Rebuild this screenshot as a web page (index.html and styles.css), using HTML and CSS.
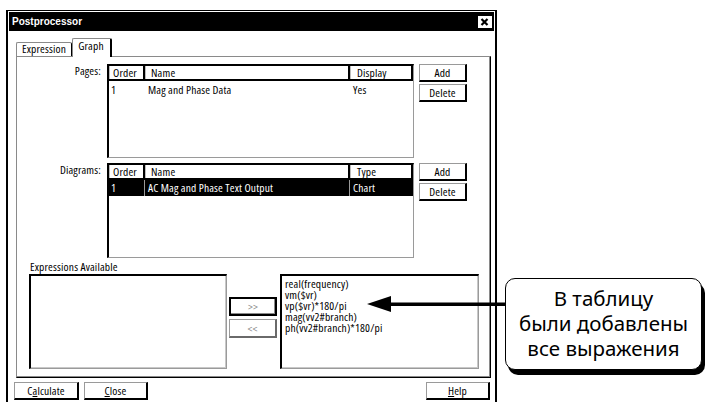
FILE: index.html
```html
<!DOCTYPE html>
<html>
<head>
<meta charset="utf-8">
<link rel="stylesheet" href="styles.css">
</head>
<body>
<div class="dialog">
  <div class="titlebar">
    <span class="title">Postprocessor</span>
    <span class="close"><svg width="13" height="12" viewBox="0 0 13 12"><path d="M3.5 3 L9.5 9 M9.5 3 L3.5 9" stroke="#000" stroke-width="2.2"/></svg></span>
  </div>
  <div class="tabs">
    <div class="tab">Expression</div>
    <div class="tab active">Graph</div>
  </div>
  <div class="panel">
    <div class="row">
      <div class="label">Pages:</div>
      <div class="list pages">
        <div class="thead"><div class="c1">Order</div><div class="c2">Name</div><div class="c3">Display</div></div>
        <div class="tr"><div class="c1">1</div><div class="c2">Mag and Phase Data</div><div class="c3">Yes</div></div>
      </div>
      <div class="btns"><div class="btn">Add</div><div class="btn">Delete</div></div>
    </div>
    <div class="row second">
      <div class="label">Diagrams:</div>
      <div class="list diagrams">
        <div class="thead"><div class="c1">Order</div><div class="c2">Name</div><div class="c3">Type</div></div>
        <div class="tr sel"><div class="c1">1</div><div class="c2">AC Mag and Phase Text Output</div><div class="c3">Chart</div></div>
      </div>
      <div class="btns"><div class="btn">Add</div><div class="btn">Delete</div></div>
    </div>
    <div class="exlabel">Expressions Available</div>
    <div class="exrow">
      <div class="box left"></div>
      <div class="mid">
        <div class="btn def">&gt;&gt;</div>
        <div class="btn dis">&lt;&lt;</div>
      </div>
      <div class="box right">real(frequency)<br>vm($vr)<br>vp($vr)*180/pi<br>mag(vv2#branch)<br>ph(vv2#branch)*180/pi</div>
    </div>
  </div>
  <div class="footer">
    <div class="btn calc">C<u>a</u>lculate</div>
    <div class="btn closeb"><u>C</u>lose</div>
    <div class="btn help"><u>H</u>elp</div>
  </div>
</div>
<svg class="arrow" width="707" height="402" viewBox="0 0 707 402">
  <polygon points="367,304 391,296 391,312" fill="#000"/>
  <rect x="389" y="302.5" width="118" height="3.5" fill="#000"/>
</svg>
<div class="callout">
  <div>В таблицу</div>
  <div>были добавлены</div>
  <div>все выражения</div>
</div>
</body>
</html>
```
FILE: styles.css
```css
* { box-sizing: border-box; }
body {
  margin: 0;
  padding: 10px 0 0 6px;
  width: 707px;
  height: 402px;
  overflow: hidden;
  position: relative;
  background: #fff;
  color: #000;
  font-family: "Open Sans", "Liberation Sans", Arial, sans-serif;
  font-stretch: 75%;
  font-size: 11.5px;
  letter-spacing: 0.15px;
}
.dialog {
  width: 491px;
  height: 400px;
  border: 2px solid #000;
  border-top-width: 1px;
  padding: 1px;
  display: flex;
  flex-direction: column;
}
.titlebar {
  height: 19px;
  flex: none;
  background: #000;
  color: #fff;
  display: flex;
  align-items: center;
  justify-content: space-between;
  padding: 0 2px 0 3px;
}
.title {
  font-family: "Liberation Sans", Arial, sans-serif;
  font-stretch: normal;
  font-weight: bold;
  font-size: 10px;
  letter-spacing: 0;
}
.close {
  width: 14px;
  height: 12px;
  background: #fff;
  display: flex;
}
.tabs {
  height: 25px;
  flex: none;
  display: flex;
  align-items: flex-end;
  padding-left: 7px;
  position: relative;
  z-index: 2;
}
.tab {
  height: 14px;
  border: 1px solid #8a8a8a;
  border-bottom: none;
  border-right: 1px solid #000;
  border-radius: 2px 2px 0 0;
  padding: 0 5px 0 5px;
  line-height: 12px;
  background: #fff;
}
.tab.active {
  height: 19px;
  margin-bottom: -1px;
  padding: 0 6px 0 5px;
  line-height: 14px;
  border-left: 1px solid #8a8a8a;
  border-right: 2px solid #000;
}
.panel {
  margin-left: 7px;
  width: 475px;
  border: 1px solid #8a8a8a;
  border-right: 1px solid #000;
  border-bottom: 1px solid #000;
  box-shadow: inset -1px -1px 0 #8a8a8a;
  padding: 7px 0 8px 0;
  flex: none;
}
.row {
  display: flex;
  height: 94px;
}
.row.second {
  margin-top: 5px;
  height: 95px;
}
.label {
  width: 84px;
  text-align: right;
  padding-top: 1px;
  margin-right: 6px;
  line-height: 11px;
}
.list {
  width: 307px;
  height: 100%;
  border-top: 2px solid #000;
  border-left: 2px solid #000;
  border-right: 1px solid #9a9a9a;
  border-bottom: 1px solid #9a9a9a;
  background: #fff;
}
.thead, .tr {
  display: flex;
  line-height: 11px;
}
.thead {
  height: 15px;
  border-bottom: 2px solid #000;
}
.thead > div {
  border-right: 2px solid #000;
  border-left: 1px solid #bdbdbd;
  padding: 1px 0 0 3px;
}
.c1 { width: 36px; flex: none; padding-left: 2px; }
.c2 { width: 205px; flex: none; padding-left: 3px; }
.c3 { width: 63px; flex: none; padding-left: 3px; }
.thead .c3 { width: 63px; padding-left: 6px; }
.thead .c2 { padding-left: 5px; }
.tr {
  height: 16px;
  padding-top: 3px;
}
.tr.sel {
  background: #000;
  color: #fff;
  padding-top: 0;
}
.tr.sel > div {
  padding-top: 2px;
}
.tr.sel .c1 { border-right: 1px solid #9a9a9a; }
.tr.sel .c2 { border-right: 1px solid #9a9a9a; }
.btns {
  margin-left: 5px;
  display: flex;
  flex-direction: column;
  gap: 2px;
}
.btn {
  width: 48px;
  height: 18px;
  border: 1px solid #9a9a9a;
  border-right: 2px solid #000;
  border-bottom: 2px solid #000;
  display: flex;
  align-items: center;
  justify-content: center;
  line-height: 11px;
  background: #fff;
}
.exlabel {
  margin: 3px 0 0 13px;
  height: 11px;
  line-height: 11px;
}
.exrow {
  display: flex;
  margin: 2px 0 0 12px;
  height: 95px;
}
.box {
  height: 95px;
  border-top: 2px solid #000;
  border-left: 2px solid #000;
  border-right: 1px solid #9a9a9a;
  border-bottom: 1px solid #9a9a9a;
  box-shadow: inset -1px -1px 0 #c8c8c8;
}
.box.left { width: 198px; }
.box.right {
  width: 199px;
  padding: 2px 3px;
  line-height: 11px;
}
.mid {
  margin: 0 3px 0 2px;
  padding-top: 23px;
  display: flex;
  flex-direction: column;
  gap: 3px;
}
.mid .btn { height: 19px; color: #8a8a8a; }
.btn.def {
  border: 2px solid #000;
  box-shadow: inset -1px -1px 0 #8a8a8a;
}
.btn.dis {
  border: 1px solid #9a9a9a;
  border-right: 2px solid #6a6a6a;
  border-bottom: 2px solid #6a6a6a;
}
.footer {
  display: flex;
  margin-top: 4px;
  padding: 0 4px 0 5px;
}
.footer .btn { width: 65px; }
.footer .closeb { margin-left: 5px; width: 64px; }
.footer .help { margin-left: auto; width: 64px; }
.arrow {
  position: absolute;
  left: 0;
  top: 0;
  pointer-events: none;
}
.callout {
  position: absolute;
  left: 505px;
  top: 278px;
  width: 197px;
  height: 92px;
  border: 1.5px solid #000;
  border-radius: 10px;
  box-shadow: 3px 5px 0 #000;
  background: #fff;
  display: flex;
  flex-direction: column;
  justify-content: center;
  align-items: center;
  font-family: "Noto Sans", "Open Sans", sans-serif;
  font-stretch: normal;
  letter-spacing: 0;
  font-size: 20.5px;
  line-height: 25px;
  padding-bottom: 2px;
}
```
